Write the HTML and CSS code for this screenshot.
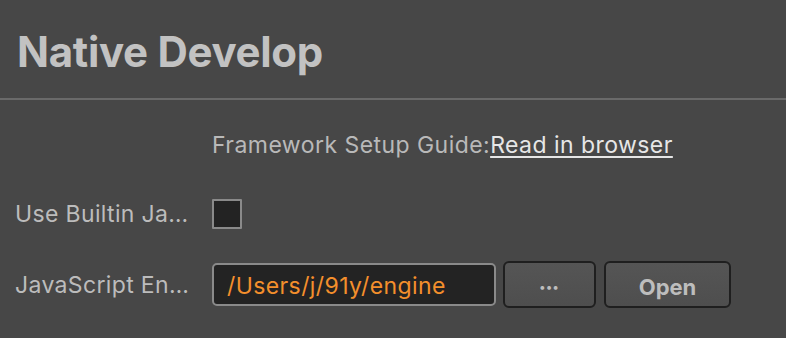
FILE: index.html
```html
<!DOCTYPE html>
<html lang="en">
<head>
    <meta charset="UTF-8">
    <meta name="viewport" content="width=device-width, initial-scale=1.0">
    <title>Native Develop</title>
    <link rel="stylesheet" href="styles.css">
</head>
<body>

<div class="panel">
    <h1 class="panel-title">Native Develop</h1>

    <div class="settings">
        <div class="row row-guide">
            <span class="row-label"></span>
            <div class="guide">Framework Setup Guide:<a href="#" class="guide-link">Read in browser</a></div>
        </div>

        <div class="row row-check">
            <label class="row-label" for="builtin">Use Builtin Ja…</label>
            <input type="checkbox" id="builtin" class="checkbox">
        </div>

        <div class="row row-engine">
            <label class="row-label" for="engine">JavaScript En…</label>
            <input type="text" id="engine" class="path-input" value="/Users/j/91y/engine">
            <button class="btn btn-dots">•••</button>
            <button class="btn btn-open">Open</button>
        </div>
    </div>
</div>

</body>
</html>
```

FILE: styles.css
```css
html, body {
    margin: 0;
    height: 100%;
}
body {
    font-family: Inter, "Liberation Sans", sans-serif;
    background-color: #474747;
    color: #bdbdbd;
}
.panel-title {
    margin: 0;
    height: 100px;
    padding-left: 17px;
    box-sizing: border-box;
    padding-top: 25px;
    font-size: 42px;
    line-height: 54px;
    font-weight: 700;
    color: #c2c2c2;
    border-bottom: 2px solid #6a6a6a;
    letter-spacing: -0.3px;
}
.settings {
    padding-left: 15px;
}
.row {
    display: flex;
    align-items: center;
}
.row-label {
    width: 197px;
    flex-shrink: 0;
    font-size: 23px;
    letter-spacing: 0.35px;
    color: #bcbcbc;
    white-space: nowrap;
}
.row-guide {
    height: 50px;
    margin-top: 20px;
}
.guide {
    font-size: 23px;
    letter-spacing: 0.45px;
    color: #b9b9b9;
}
.guide-link {
    color: #e6e6e6;
    text-decoration: underline;
    text-underline-offset: 3px;
}
.row-check {
    height: 30px;
    margin-top: 29px;
}
.checkbox {
    appearance: none;
    margin: 0;
    width: 30px;
    height: 30px;
    box-sizing: border-box;
    background: #232323;
    border: 2px solid #8a8a8a;
    border-radius: 1px;
}
.row-engine {
    margin-top: 32px;
    height: 47px;
}
.path-input {
    width: 284px;
    height: 43px;
    box-sizing: border-box;
    margin: 0;
    padding: 2px 0 0 13px;
    background: #232323;
    border: 2px solid #8a8a8a;
    border-radius: 5px;
    color: #f48f2c;
    font-family: inherit;
    font-size: 23px;
    letter-spacing: 0.4px;
    outline: none;
}
.btn {
    height: 47px;
    box-sizing: border-box;
    margin-left: 7px;
    background: linear-gradient(#555555, #4e4e4e);
    border: 2px solid #1f1f1f;
    border-radius: 6px;
    color: #bdbdbd;
    font-family: inherit;
    font-size: 22px;
    font-weight: 700;
    padding-top: 5px;
    cursor: pointer;
}
.btn-dots {
    width: 93px;
    font-size: 12px;
    letter-spacing: 1px;
    padding-top: 4px;
}
.btn-open {
    width: 127px;
    margin-left: 8px;
}
```
